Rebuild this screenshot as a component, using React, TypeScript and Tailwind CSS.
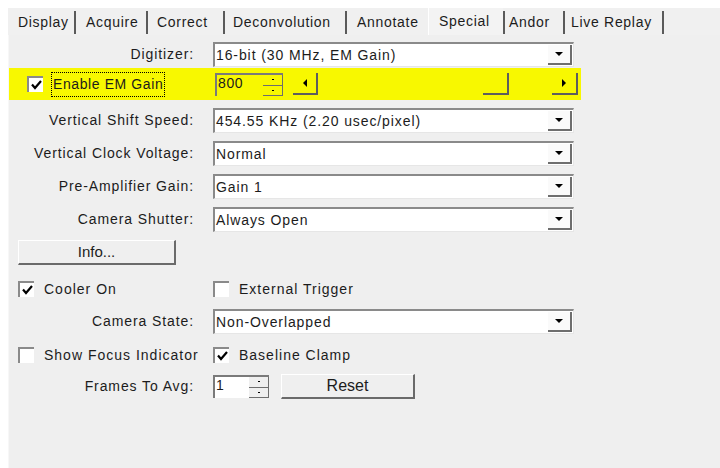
import type { ReactNode } from 'react'

const font = { fontFamily: '"Liberation Sans", Arial, sans-serif' }

type Tab = { label: string; w: string; pl: string; sep: boolean; active?: boolean }

const tabs: Tab[] = [
  { label: 'Display', w: 'w-[68px]', pl: 'pl-[10px]', sep: true },
  { label: 'Acquire', w: 'w-[72px]', pl: 'pl-[10px]', sep: true },
  { label: 'Correct', w: 'w-[77px]', pl: 'pl-[9px]', sep: true },
  { label: 'Deconvolution', w: 'w-[122px]', pl: 'pl-[8px]', sep: true },
  { label: 'Annotate', w: 'w-[81px]', pl: 'pl-[10px]', sep: false },
  { label: 'Special', w: 'w-[77px]', pl: 'pl-[10px]', sep: true, active: true },
  { label: 'Andor', w: 'w-[60px]', pl: 'pl-[4px]', sep: true },
  { label: 'Live Replay', w: 'w-[99px]', pl: 'pl-[6px]', sep: true },
]

function TabStrip() {
  return (
    <div className="flex h-[27px] bg-[#f0f0f0]">
      {tabs.map((t) => (
        <div key={t.label} className={`relative flex h-full shrink-0 ${t.w}`}>
          <div
            className={`flex h-full flex-1 ${t.pl} ${
              t.active ? 'items-start border-l border-white bg-[#f3f3f3] pt-[3px]' : 'items-center pt-[1px]'
            }`}
          >
            <span className="text-[14px] tracking-[0.7px] whitespace-nowrap text-[#1c1c1c]">{t.label}</span>
          </div>
          {t.sep && (
            <div className="mt-[3px] flex h-[23px]">
              <div className="w-[2px] bg-[#5a5a5a]" />
            </div>
          )}
        </div>
      ))}
      <div className="flex-1" />
    </div>
  )
}

function Arrow({ dir }: { dir: 'down' | 'left' | 'right' }) {
  if (dir === 'down') return <div className="h-0 w-0 border-x-[4px] border-t-[4px] border-x-transparent border-t-black" />
  if (dir === 'left') return <div className="h-0 w-0 border-y-[4px] border-r-[4px] border-y-transparent border-r-black" />
  return <div className="h-0 w-0 border-y-[4px] border-l-[4px] border-y-transparent border-l-black" />
}

function Select({ value }: { value: string }) {
  return (
    <div className="flex h-[25px] w-[361px] border-t-2 border-l-2 border-t-[#8a8a8a] border-l-[#8a8a8a] border-r border-b border-r-[#e6e6e6] border-b-[#e6e6e6] bg-white">
      <div className="flex flex-1 items-center pl-[1px] text-[14px] tracking-[0.9px] whitespace-nowrap text-[#1c1c1c]">
        {value}
      </div>
      <div className="my-[1px] mr-[1px] flex w-[24px] items-center justify-center border-r-2 border-b-2 border-r-[#6e6e6e] border-b-[#6e6e6e] bg-[#fafafa]">
        <Arrow dir="down" />
      </div>
    </div>
  )
}

function SpinButtons({ face }: { face: string }) {
  return (
    <div className="flex w-[20px] flex-col">
      <div className={`flex flex-1 items-center justify-center border-r border-b border-[#6e6e6e] ${face}`}>
        <div className="h-[1px] w-[2px] bg-black" />
      </div>
      <div className={`flex flex-1 items-center justify-center border-r border-b border-[#6e6e6e] ${face}`}>
        <div className="h-[1px] w-[2px] bg-black" />
      </div>
    </div>
  )
}

function Spin({ value, w, face, bg }: { value: string; w: string; face: string; bg: string }) {
  return (
    <div className={`flex h-[23px] ${w} border-t-2 border-l-2 border-[#7a7a7a] ${bg}`}>
      <div className="flex flex-1 items-start pl-[1px] text-[14px] leading-[17px] tracking-[0.6px] text-[#1c1c1c]">{value}</div>
      <SpinButtons face={face} />
    </div>
  )
}

function Check({ checked }: { checked: boolean }) {
  return (
    <div className="flex h-[16px] w-[16px] shrink-0 items-center justify-center border-t-2 border-l-2 border-[#8a8a8a] bg-white">
      {checked && (
        <svg width="11" height="10" viewBox="0 0 11 10">
          <path d="M1 4.5 L4 8 L10 1" fill="none" stroke="black" strokeWidth="2.2" />
        </svg>
      )}
    </div>
  )
}

function Button({ label, w, size }: { label: string; w: string; size: string }) {
  return (
    <div
      className={`flex h-[25px] ${w} ${size} items-center justify-center border-t border-l border-white border-r-2 border-b-2 border-r-[#6a6a6a] border-b-[#6a6a6a] bg-[#efefef] text-[#1c1c1c]`}
    >
      {label}
    </div>
  )
}

function Row({ label, children, className = '' }: { label: string; children: ReactNode; className?: string }) {
  return (
    <div className={`flex items-center ${className}`}>
      <div className="w-[185px] text-right text-[14px] tracking-[0.9px] whitespace-nowrap text-[#1c1c1c]">{label}</div>
      <div className="ml-[19px]">{children}</div>
    </div>
  )
}

function CheckLabel({ checked, label }: { checked: boolean; label: string }) {
  return (
    <div className="flex items-center gap-[10px]">
      <Check checked={checked} />
      <span className="text-[14px] tracking-[1px] whitespace-nowrap text-[#1c1c1c]">{label}</span>
    </div>
  )
}

function EmGainRow() {
  return (
    <div className="mt-[1px] flex h-[32px] w-[572px] items-center bg-[#f8f800]">
      <div className="ml-[18px] flex w-[186px] items-center">
        <Check checked />
        <div className="ml-[8px] border border-dotted border-black px-[1px] py-[1px] text-[14px] tracking-[0.6px] whitespace-nowrap text-[#1c1c1c]">
          Enable EM Gain
        </div>
      </div>
      <div className="ml-[2px] mt-[1px]">
        <Spin value="800" w="w-[68px]" face="bg-transparent" bg="bg-transparent" />
      </div>
      {/* horizontal trackbar: arrow, track, thumb, track, arrow */}
      <div className="ml-[10px] flex h-[22px] w-[285px]">
        <div className="flex w-[25px] items-center justify-center border-r-2 border-b-2 border-[#5e5e5e]">
          <Arrow dir="left" />
        </div>
        <div className="w-[165px]" />
        <div className="w-[26px] border-r-2 border-b-2 border-[#5e5e5e]" />
        <div className="flex-1" />
        <div className="flex w-[26px] items-center justify-center border-r-2 border-b-2 border-[#5e5e5e]">
          <Arrow dir="right" />
        </div>
      </div>
    </div>
  )
}

export default function App() {
  return (
    <div className="h-[468px] w-[720px] overflow-hidden bg-white pt-[8px] pl-[8px]" style={font}>
      <TabStrip />
      <div className="flex h-[433px] flex-col border-l border-[#f7f7f7] bg-[#efefef]">
        <Row label="Digitizer:" className="mt-[7px]">
          <Select value="16-bit (30 MHz, EM Gain)" />
        </Row>
        <EmGainRow />
        <Row label="Vertical Shift Speed:" className="mt-[8px]">
          <Select value="454.55 KHz (2.20 usec/pixel)" />
        </Row>
        <Row label="Vertical Clock Voltage:" className="mt-[8px]">
          <Select value="Normal" />
        </Row>
        <Row label="Pre-Amplifier Gain:" className="mt-[8px]">
          <Select value="Gain 1" />
        </Row>
        <Row label="Camera Shutter:" className="mt-[8px]">
          <Select value="Always Open" />
        </Row>
        <div className="mt-[8px] ml-[9px]">
          <Button label="Info..." w="w-[158px]" size="text-[15px]" />
        </div>
        <div className="mt-[14px] flex h-[20px] items-center">
          <div className="ml-[9px] w-[195px]">
            <CheckLabel checked label="Cooler On" />
          </div>
          <CheckLabel checked={false} label="External Trigger" />
        </div>
        <Row label="Camera State:" className="mt-[10px]">
          <Select value="Non-Overlapped" />
        </Row>
        <div className="mt-[11px] flex h-[20px] items-center">
          <div className="ml-[9px] w-[195px]">
            <CheckLabel checked={false} label="Show Focus Indicator" />
          </div>
          <CheckLabel checked label="Baseline Clamp" />
        </div>
        <Row label="Frames To Avg:" className="mt-[9px]">
          <div className="flex items-center">
            <Spin value="1" w="w-[56px]" face="bg-[#efefef]" bg="bg-white" />
            <div className="ml-[12px]">
              <Button label="Reset" w="w-[134px]" size="text-[16px]" />
            </div>
          </div>
        </Row>
      </div>
    </div>
  )
}
